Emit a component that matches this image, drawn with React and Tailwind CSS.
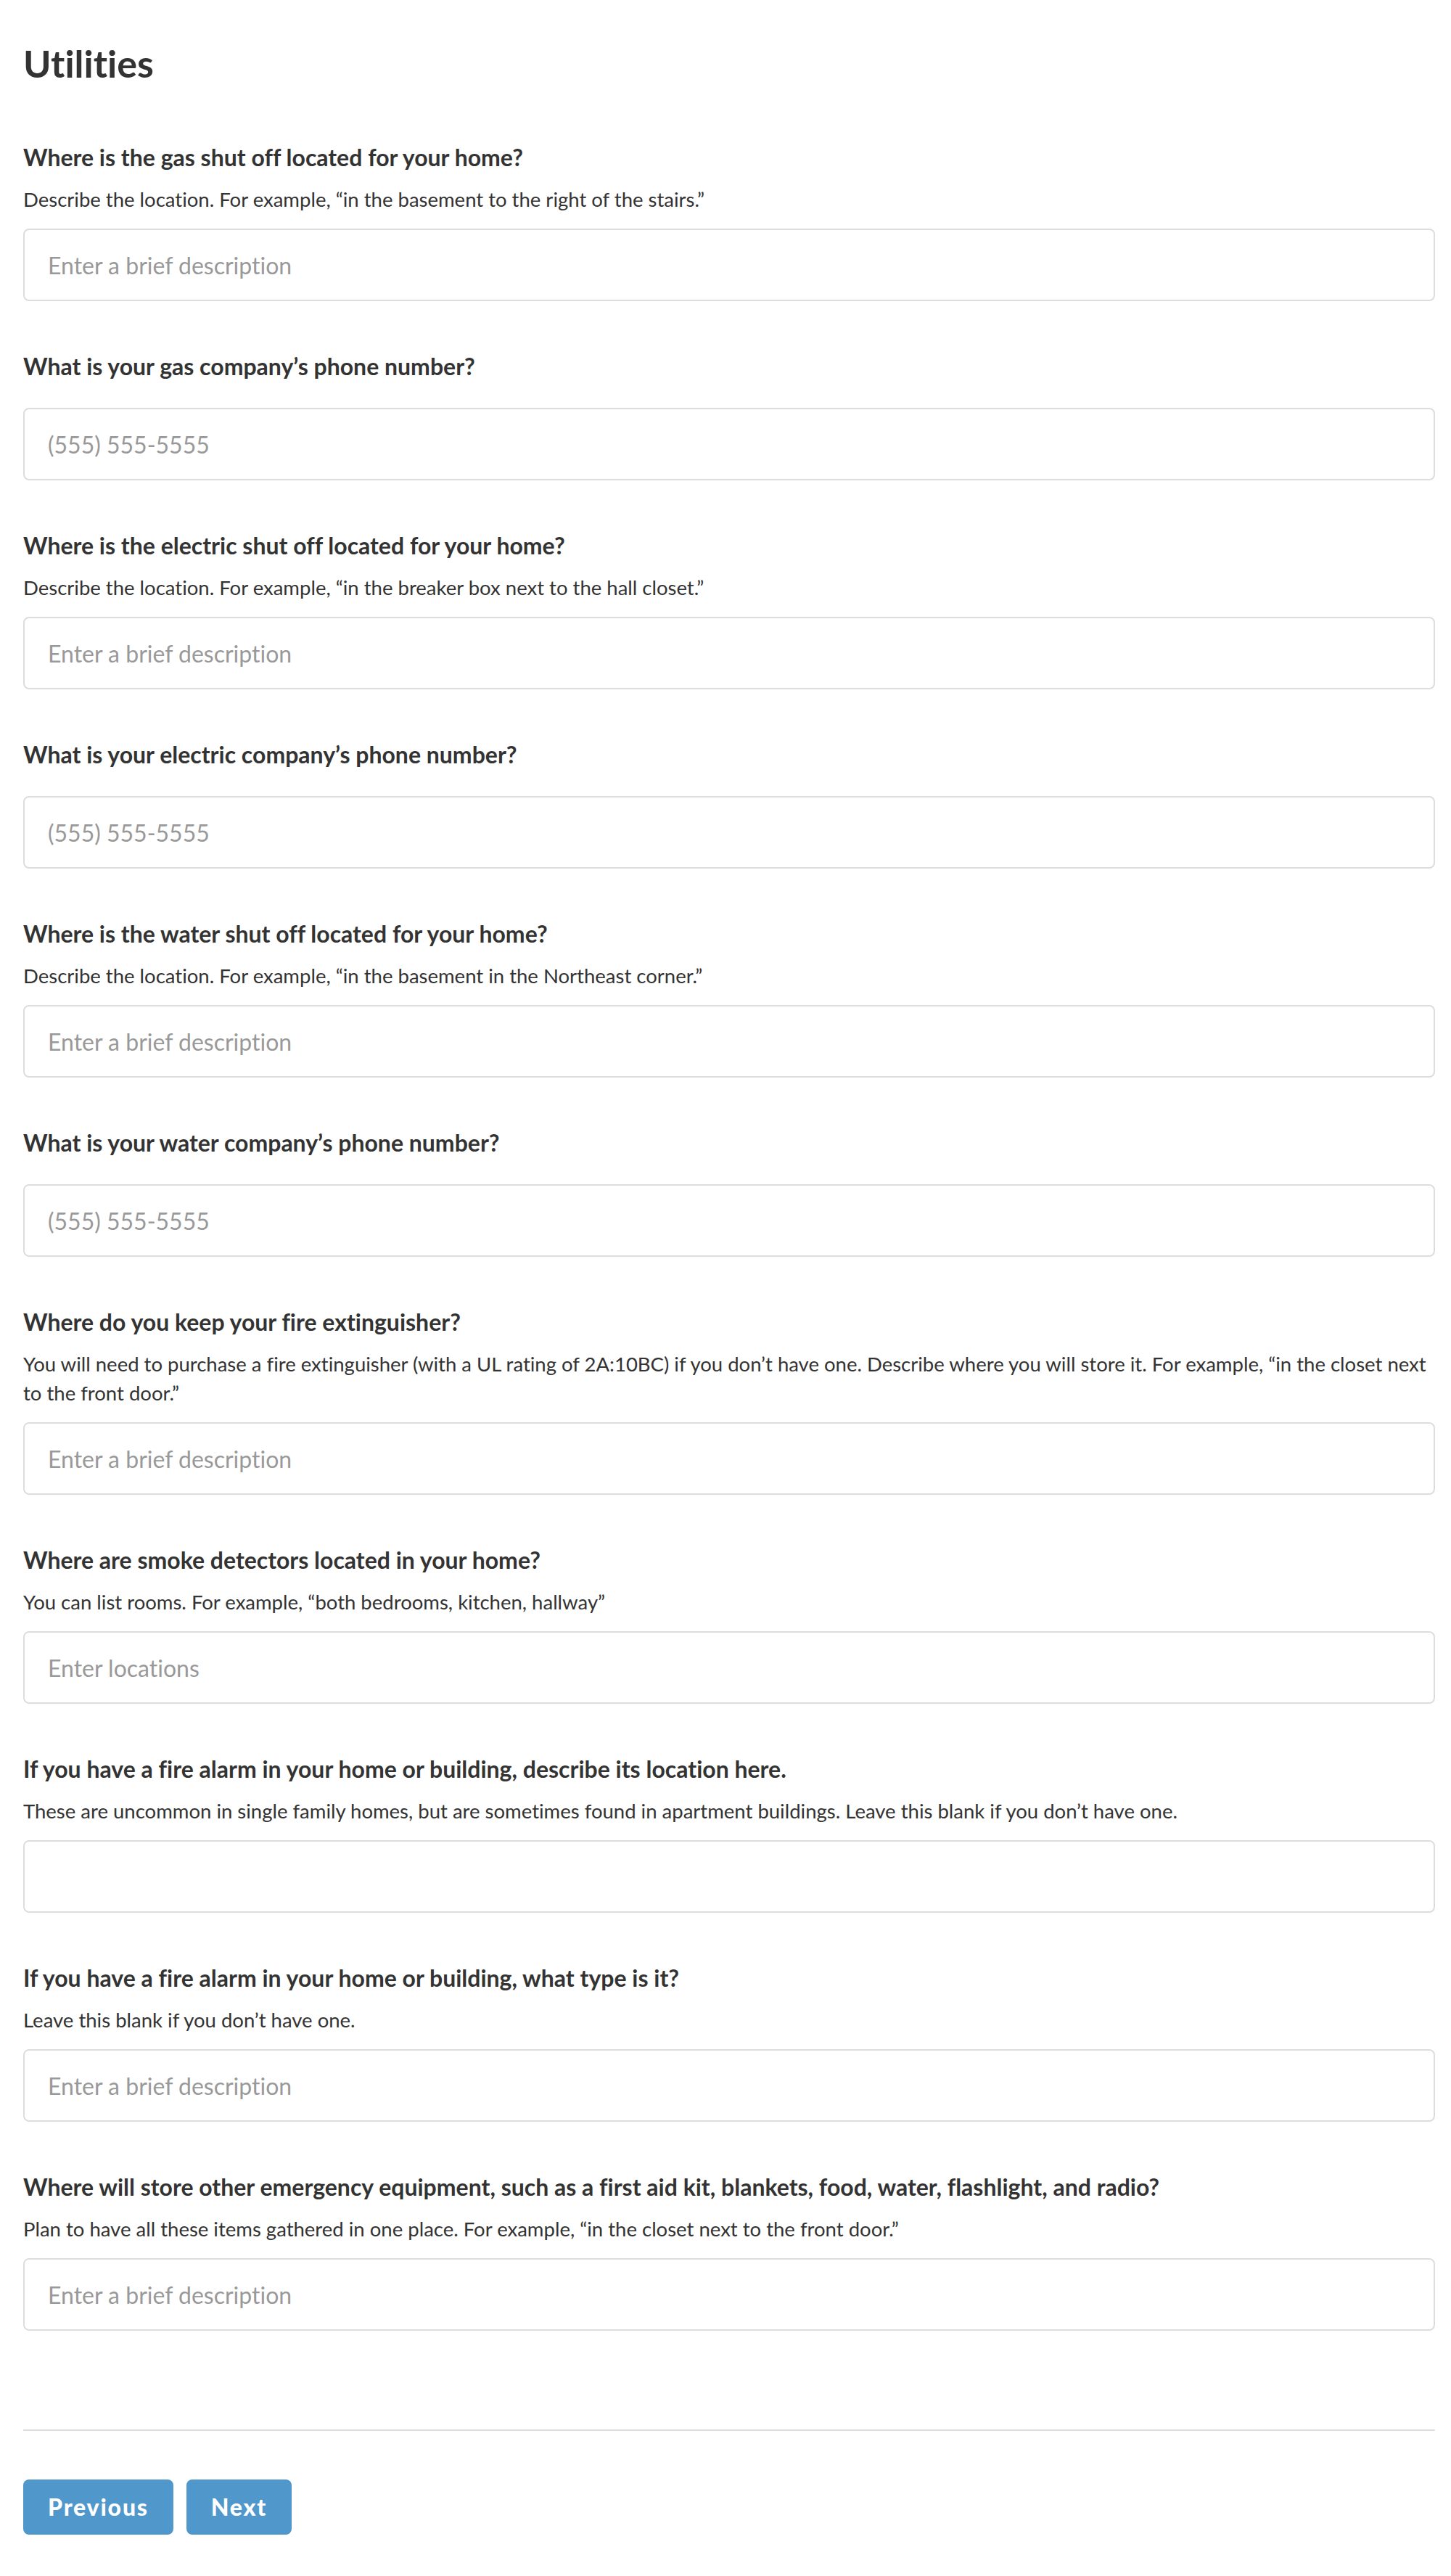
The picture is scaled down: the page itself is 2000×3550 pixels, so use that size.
import React from "react";

const fields = [
  {
    label: "Where is the gas shut off located for your home?",
    help: "Describe the location. For example, “in the basement to the right of the stairs.”",
    placeholder: "Enter a brief description",
  },
  { label: "What is your gas company’s phone number?", placeholder: "(555) 555-5555" },
  {
    label: "Where is the electric shut off located for your home?",
    help: "Describe the location. For example, “in the breaker box next to the hall closet.”",
    placeholder: "Enter a brief description",
  },
  { label: "What is your electric company’s phone number?", placeholder: "(555) 555-5555" },
  {
    label: "Where is the water shut off located for your home?",
    help: "Describe the location. For example, “in the basement in the Northeast corner.”",
    placeholder: "Enter a brief description",
  },
  { label: "What is your water company’s phone number?", placeholder: "(555) 555-5555" },
  {
    label: "Where do you keep your fire extinguisher?",
    help: (
      <>
        You will need to purchase a fire extinguisher (with a UL rating of 2A:10BC) if you don’t have one. Describe
        where you will store it. For example, “in the closet next
        <br />
        to the front door.”
      </>
    ),
    placeholder: "Enter a brief description",
  },
  {
    label: "Where are smoke detectors located in your home?",
    help: "You can list rooms. For example, “both bedrooms, kitchen, hallway”",
    placeholder: "Enter locations",
  },
  {
    label: "If you have a fire alarm in your home or building, describe its location here.",
    help: "These are uncommon in single family homes, but are sometimes found in apartment buildings. Leave this blank if you don’t have one.",
    placeholder: "",
  },
  {
    label: "If you have a fire alarm in your home or building, what type is it?",
    help: "Leave this blank if you don’t have one.",
    placeholder: "Enter a brief description",
  },
  {
    label: "Where will store other emergency equipment, such as a first aid kit, blankets, food, water, flashlight, and radio?",
    help: "Plan to have all these items gathered in one place. For example, “in the closet next to the front door.”",
    placeholder: "Enter a brief description",
  },
];

function Field({ label, help, placeholder }) {
  return (
    <div>
      <label className="block text-[32px] font-bold leading-[36px]">{label}</label>
      {help ? (
        <p className="mt-[20px] mb-[20px] text-[27.5px] leading-[40px]">{help}</p>
      ) : (
        <div className="h-[39px]" />
      )}
      <input
        type="text"
        placeholder={placeholder}
        className="block h-[100px] w-full rounded-[8px] border-2 border-[#dddddd] bg-white px-[32px] text-[32px] text-[#333] outline-none placeholder:text-[#999999]"
      />
    </div>
  );
}

export default function App() {
  return (
    <div className="bg-white pl-8 pr-[22px] pt-[56px] pb-[40px] font-['Lato',sans-serif] text-[#333333] [font-variant-ligatures:none]">
      <h1 className="text-[52px] font-bold leading-[62px]">Utilities</h1>

      <div className="mt-[81px] flex flex-col gap-[72px]">
        {fields.map((f) => (
          <Field key={f.label} {...f} />
        ))}
      </div>

      <hr className="mt-[136px] border-0 border-t-2 border-[#dddddd]" />

      <div className="mt-[67px] flex gap-[18px]">
        <button className="h-[76px] rounded-[8px] bg-[#5097cc] px-[34px] text-[32px] font-black tracking-[1.8px] text-white">
          Previous
        </button>
        <button className="h-[76px] rounded-[8px] bg-[#5097cc] px-[34px] text-[32px] font-black tracking-[1.8px] text-white">
          Next
        </button>
      </div>
    </div>
  );
}
